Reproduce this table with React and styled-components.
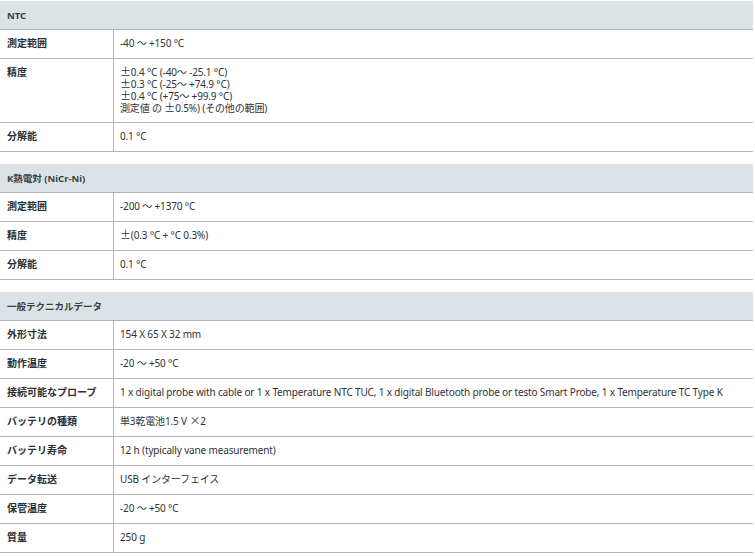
import React from 'react';
import styled, { createGlobalStyle } from 'styled-components';

const GlobalStyle = createGlobalStyle`
  html, body {
    margin: 0;
    padding: 0;
    background: #ffffff;
  }
  body {
    font-family: "Noto Sans", "Noto Sans CJK JP", sans-serif;
    color: #2e3236;
  }
`;

const Page = styled.div`
  width: 753px;
  padding-top: 1px;
  display: flex;
  flex-direction: column;
  gap: 12px;
`;

const Section = styled.section`
  display: flex;
  flex-direction: column;
`;

const Head = styled.div`
  height: 28px;
  display: flex;
  align-items: center;
  padding-left: 7px;
  background: #dce3e6;
  border-bottom: 1px solid #a9b3b9;
  font-size: 9.5px;
  font-weight: 700;
  color: #3a3f44;
`;

const Row = styled.div`
  display: grid;
  grid-template-columns: 114px 1fr;
  border-bottom: 1px solid #aeb8be;
`;

const Label = styled.div`
  padding: 7px 0 9px 7px;
  border-right: 1px solid #aeb8be;
  font-size: 10px;
  line-height: 12px;
  font-weight: 700;
  color: #2b2f33;
`;

const Value = styled.div`
  padding: ${(p) => (p.multi ? '7px 0 8px 6px' : '7px 0 9px 6px')};
  font-size: 10px;
  line-height: 12px;
  letter-spacing: -0.15px;
  color: #2e3236;
  white-space: pre-line;
`;

const Wide = styled.span`
  font-family: "Noto Sans CJK JP", sans-serif;
  font-size: 11px;
  line-height: 0;
`;

const sections = [
  {
    title: 'NTC',
    rows: [
      ['測定範囲', '-40 〜 +150 °C'],
      ['精度', '±0.4 °C (-40〜 -25.1 °C)\n±0.3 °C (-25〜 +74.9 °C)\n±0.4 °C (+75〜 +99.9 °C)\n測定値 の ±0.5%) (その他の範囲)'],
      ['分解能', '0.1 °C'],
    ],
  },
  {
    title: 'K熱電対 (NiCr-Ni)',
    rows: [
      ['測定範囲', '-200 〜 +1370 °C'],
      ['精度', '±(0.3 °C + °C 0.3%)'],
      ['分解能', '0.1 °C'],
    ],
  },
  {
    title: '一般テクニカルデータ',
    rows: [
      ['外形寸法', '154 X 65 X 32 mm'],
      ['動作温度', '-20 〜 +50 °C'],
      ['接続可能なプローブ', '1 x digital probe with cable or 1 x Temperature NTC TUC, 1 x digital Bluetooth probe or testo Smart Probe, 1 x Temperature TC Type K'],
      ['バッテリの種類', '単3乾電池1.5 V ×2'],
      ['バッテリ寿命', '12 h (typically vane measurement)'],
      ['データ転送', 'USB インターフェイス'],
      ['保管温度', '-20 〜 +50 °C'],
      ['質量', '250 g'],
    ],
  },
];

// ± and × are drawn wide in the reference (CJK glyphs)
const withWide = (text) =>
  text.split(/([±×])/).map((part, i) =>
    part === '±' || part === '×' ? <Wide key={i}>{part}</Wide> : part
  );

export default function App() {
  return (
    <>
      <GlobalStyle />
      <Page>
        {sections.map((s) => (
          <Section key={s.title}>
            <Head>{s.title}</Head>
            {s.rows.map(([label, value]) => (
              <Row key={label}>
                <Label>{label}</Label>
                <Value multi={value.includes('\n')}>{withWide(value)}</Value>
              </Row>
            ))}
          </Section>
        ))}
      </Page>
    </>
  );
}
